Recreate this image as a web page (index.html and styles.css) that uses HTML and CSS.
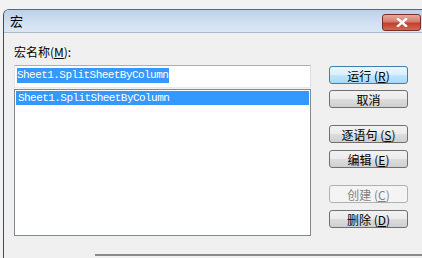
FILE: index.html
```html
<!DOCTYPE html>
<html lang="zh-CN">
<head>
    <meta charset="UTF-8">
    <title>宏</title>
    <link rel="stylesheet" href="styles.css">
</head>
<body>
    <div class="window">
        <div class="titlebar">
            <span class="title">宏</span>
            <button class="close">
                <svg width="14" height="9" viewBox="0 0 14 9">
                    <path d="M3 1 L11 8 M11 1 L3 8" stroke="#fff" stroke-width="2.4" stroke-linecap="square"/>
                </svg>
            </button>
        </div>
        <div class="client">
            <div class="main">
                <div class="left">
                    <label class="label">宏名称(<u>M</u>):</label>
                    <div class="name-box"><span class="sel">Sheet1.SplitSheetByColumn</span></div>
                    <div class="list">
                        <div class="item active">Sheet1.SplitSheetByColumn</div>
                    </div>
                </div>
                <div class="buttons">
                    <button class="btn default">运行 (<u>R</u>)</button>
                    <button class="btn">取消</button>
                    <button class="btn gap">逐语句 (<u>S</u>)</button>
                    <button class="btn">编辑 (<u>E</u>)</button>
                    <button class="btn gap" disabled>创建 (<u>C</u>)</button>
                    <button class="btn">删除 (<u>D</u>)</button>
                </div>
            </div>
            <div class="place"></div>
        </div>
    </div>
</body>
</html>
```

FILE: styles.css
```css
body {
    margin: 0;
    width: 422px;
    height: 258px;
    overflow: hidden;
    background: #f2f2f2;
    font-family: "Noto Sans CJK SC", "Liberation Sans", sans-serif;
    font-size: 12px;
    color: #000;
}
.window {
    margin: 9px 0 0 3px;
    height: 260px;
    border-left: 1px solid #404a55;
    border-top: 1px solid #5a6878;
    border-radius: 6px 0 0 0;
    background: #f0f0f0;
    overflow: hidden;
}
.titlebar {
    height: 22px;
    display: flex;
    align-items: center;
    justify-content: space-between;
    padding: 0 0 0 6px;
    background: linear-gradient(#bcd0e8, #d2e1f2 60%, #dbe7f4);
    border-bottom: 1px solid #aabbd0;
}
.title {
    font-size: 13px;
    line-height: 22px;
}
.close {
    width: 39px;
    height: 17px;
    margin: 2px 1px 0 0;
    padding: 0;
    border: 1px solid #7a2e25;
    border-radius: 3px;
    background: linear-gradient(#e6a99c, #d77a68 45%, #c0402e 55%, #d3684f);
    display: flex;
    align-items: center;
    justify-content: center;
}
.client {
    padding: 12px 0 0 10px;
}
.main {
    display: flex;
    gap: 18px;
}
.left {
    width: 297px;
    display: flex;
    flex-direction: column;
}
.label {
    height: 20px;
    line-height: 14px;
}
.label u, .btn u {
    text-decoration: underline;
}
.name-box {
    height: 19px;
    border: 1px solid #a0a0a0;
    border-color: #abadb3 #dbdfe6 #e3e9ef #e2e3ea;
    background: #fff;
    padding: 2px 0 0 2px;
    font-family: "Liberation Mono", monospace;
    font-size: 11px;
    letter-spacing: -0.55px;
    line-height: 15px;
}
.sel {
    background: #3399ff;
    color: #fff;
    display: inline-block;
    height: 15px;
    padding-right: 1px;
}
.list {
    margin-top: 1px;
    height: 143px;
    border: 1px solid #828790;
    background: #fff;
    padding: 1px;
    font-family: "Liberation Mono", monospace;
    font-size: 11px;
    letter-spacing: -0.55px;
}
.item {
    height: 14px;
    line-height: 14px;
    padding-left: 2px;
}
.item.active {
    background: #3399ff;
    color: #fff;
}
.buttons {
    width: 79px;
    margin-top: 21px;
    display: flex;
    flex-direction: column;
    gap: 7px;
}
.btn {
    height: 18px;
    padding: 0;
    border: 1px solid #707070;
    border-radius: 3px;
    background: linear-gradient(#f2f2f2, #ebebeb 48%, #dddddd 52%, #cfcfcf);
    font-family: "Noto Sans CJK SC", "Liberation Sans", sans-serif;
    font-size: 12px;
    line-height: 15px;
    color: #000;
}
.btn.default {
    margin-bottom: -1px;
    border-color: #3c7fb1;
    background: linear-gradient(#eaf6fd, #d9f0fc 48%, #bee6fd 52%, #a7d9f5);
}
.btn.gap {
    margin-top: 10px;
}
.btn:disabled {
    border-color: #adb2b5;
    background: #f4f4f4;
    color: #838383;
}
.place {
    margin: 18px 0 0 81px;
    height: 10px;
    border-top: 2px solid #8a8a8a;
}
```
